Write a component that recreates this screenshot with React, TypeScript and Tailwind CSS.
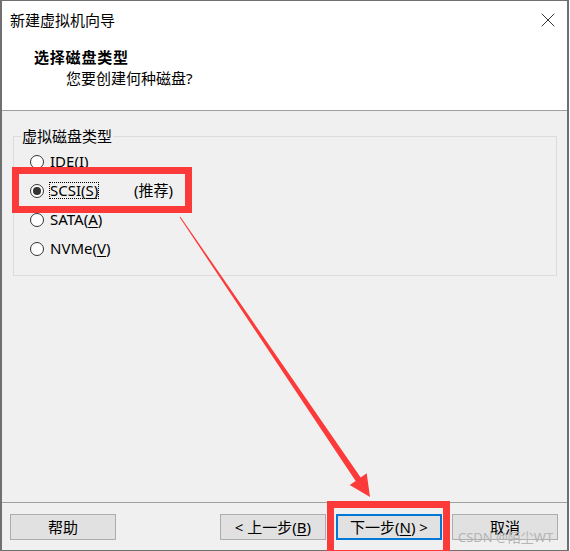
import { X } from 'lucide-react';

const font = 'font-["Noto_Sans","Noto_Sans_CJK_SC",sans-serif]';

const disks = [
  { key: 'ide', name: 'IDE', hot: 'I' },
  { key: 'scsi', name: 'SCSI', hot: 'S', note: '(推荐)', checked: true },
  { key: 'sata', name: 'SATA', hot: 'A' },
  { key: 'nvme', name: 'NVMe', hot: 'V' },
];

function Radio({ checked }: { checked?: boolean }) {
  return (
    <span className="ml-[9px] grid h-[14px] w-[14px] flex-none place-items-center rounded-full border border-[#333333] bg-white">
      {checked && <span className="h-[8px] w-[8px] rounded-full bg-[#333333]" />}
    </span>
  );
}

function Button({ children, focused }: { children: React.ReactNode; focused?: boolean }) {
  return (
    <div
      className={`grid h-[26px] w-[106px] place-items-center bg-[#e1e1e1] text-[15px] leading-none text-black ${
        focused ? 'border-2 border-[#0078d7]' : 'border border-[#adadad]'
      }`}
    >
      <span>{children}</span>
    </div>
  );
}

export default function App() {
  return (
    <div className={`relative h-[551px] w-[570px] overflow-hidden bg-white ${font}`}>
      <div className="flex h-full w-[569px] flex-col border-x-2 border-y border-[#707070]">
        {/* header */}
        <div className="h-[109px] flex-none bg-white">
          <div className="mt-[9px] flex h-[20px] items-center justify-between pl-[8px] pr-[7px]">
            <span className="text-[15px] leading-[20px] text-black">新建虚拟机向导</span>
            <X size={24} strokeWidth={0.8} className="text-black" />
          </div>
          <div className="mt-[17px] pl-[32px] text-[15px] font-bold leading-[20px] tracking-[0.8px] text-black">选择磁盘类型</div>
          <div className="mt-[1px] pl-[64px] text-[15px] leading-[20px] text-black">您要创建何种磁盘?</div>
        </div>
        <div className="h-px flex-none bg-[#a0a0a0]" />

        {/* body */}
        <div className="flex flex-1 flex-col bg-[#f0f0f0]">
          <div className="flex-1 pt-[15px]">
            <fieldset className="ml-[11px] mr-[10px] border border-[#dcdcdc] pb-[12px] pl-[7px] pt-[1px]">
              <legend className="px-[1px] text-[15px] leading-[20px] text-black">虚拟磁盘类型</legend>
              {disks.map((d) => (
                <div key={d.key} className="flex h-[29px] items-center text-[15px] text-black">
                  <Radio checked={d.checked} />
                  <div className={`ml-[5px] flex ${d.note ? 'w-[85px]' : ''}`}>
                    <span
                      className={`border leading-[15px] ${
                        d.checked ? 'border-dotted border-black' : 'border-transparent'
                      }`}
                    >
                      {d.name}(<span className="underline underline-offset-2">{d.hot}</span>)
                    </span>
                  </div>
                  {d.note && <span>{d.note}</span>}
                </div>
              ))}
            </fieldset>
          </div>

          <div className="h-px flex-none bg-[#a0a0a0]" />
          <div className="flex flex-none items-start justify-between pb-[10px] pl-[8px] pr-[9px] pt-[11px]">
            <Button>帮助</Button>
            <div className="flex gap-[10px]">
              <Button>
                &lt; 上一步(<span className="underline underline-offset-2">B</span>)
              </Button>
              <Button focused>
                下一步(<span className="underline underline-offset-2">N</span>) &gt;
              </Button>
              <Button>取消</Button>
            </div>
          </div>
        </div>
      </div>

      {/* annotations drawn over the screenshot */}
      <div className="pointer-events-none absolute left-[12px] top-[167px] h-[46px] w-[180px] border-[7px] border-[#fd3a3a]" />
      <div className="pointer-events-none absolute left-[327px] top-[501px] h-[56px] w-[123px] border-[7px] border-[#fd3a3a]" />
      <svg className="pointer-events-none absolute left-0 top-0" width="570" height="551" viewBox="0 0 570 551">
        <polygon
          points="180.4,216.7 360.7,477.5 366.7,473.3 370,497 349.7,485 355.7,480.9 179.6,217.3"
          fill="#fd3a3a"
        />
      </svg>
      <span className="pointer-events-none absolute left-[458px] top-[530px] text-[13px] leading-[15px] text-[#b4b4b4]">
        CSDN @陌尘WT
      </span>
    </div>
  );
}
